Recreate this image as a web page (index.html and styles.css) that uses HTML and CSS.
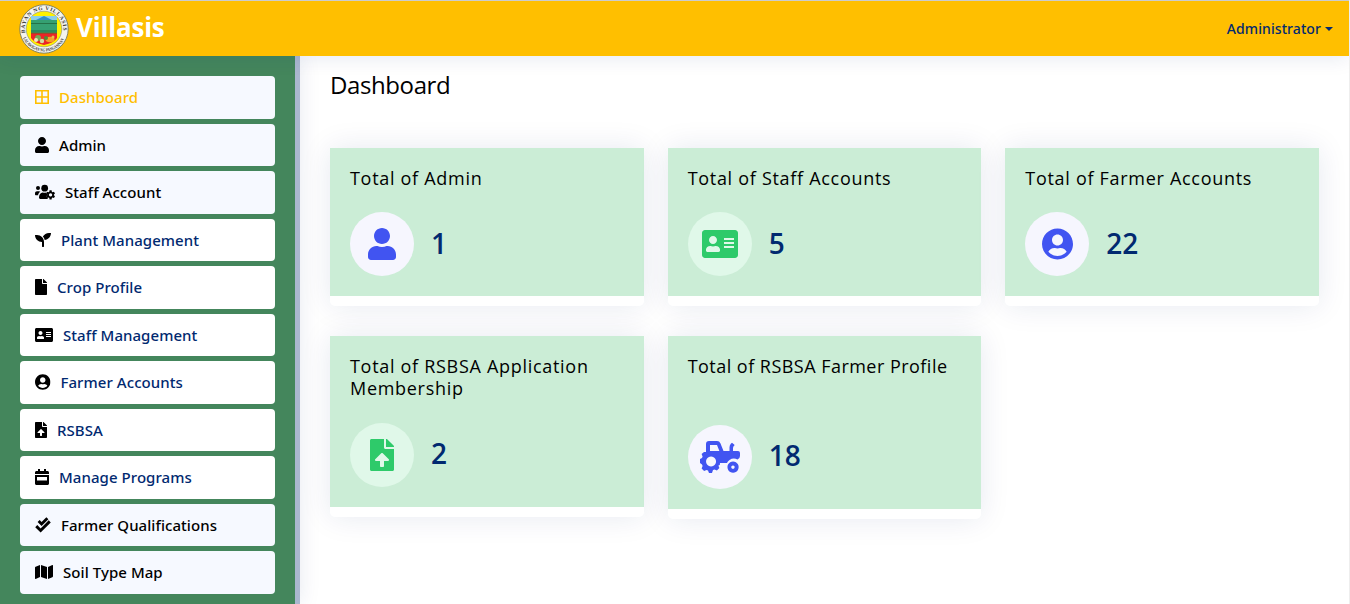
FILE: index.html
```html
<!DOCTYPE html>
<html lang="en">
<head>
<meta charset="utf-8">
<title>Dashboard</title>
<link rel="stylesheet" href="styles.css">
</head>
<body>
<svg width="0" height="0" class="defs">
  <symbol id="user" viewBox="0 0 448 512"><path d="M224 256c70.700 0 128-57.300 128-128S294.700 0 224 0 96 57.300 96 128s57.300 128 128 128zm89.600 32h-16.700c-22.200 10.200-46.900 16-72.900 16s-50.600-5.800-72.900-16h-16.700C60.200 288 0 348.200 0 422.400V464c0 26.500 21.500 48 48 48h352c26.500 0 48-21.500 48-48v-41.600c0-74.200-60.200-134.400-134.400-134.400z"/></symbol>
  <symbol id="card" viewBox="0 0 576 512"><path fill-rule="evenodd" d="M528 32H48C21.500 32 0 53.500 0 80v352c0 26.500 21.500 48 48 48h480c26.500 0 48-21.500 48-48V80c0-26.500-21.500-48-48-48zm-352 96c35.300 0 64 28.700 64 64s-28.700 64-64 64-64-28.700-64-64 28.700-64 64-64zm112 236.800c0 10.600-10 19.200-22.400 19.200H86.400C74 384 64 375.400 64 364.800v-19.200c0-31.800 30.100-57.600 67.200-57.600h5c12.300 5.100 25.700 8 39.800 8s27.600-2.900 39.800-8h5c37.100 0 67.200 25.800 67.200 57.600zM352 160h160v32H352zM352 224h160v32H352zM352 288h160v32H352z"/></symbol>
  <symbol id="circle-user" viewBox="0 0 496 512"><path d="M248 8C111 8 0 119 0 256s111 248 248 248 248-111 248-248S385 8 248 8zm0 96c48.600 0 88 39.400 88 88s-39.400 88-88 88-88-39.400-88-88 39.400-88 88-88zm0 344c-58.700 0-111.300-26.600-146.500-68.200 18.800-35.400 55.600-59.800 98.500-59.800 2.400 0 4.800.4 7.100 1.100 13 4.200 26.600 6.900 40.900 6.900 14.300 0 28-2.700 40.900-6.900 2.300-.7 4.700-1.100 7.100-1.100 42.900 0 79.700 24.400 98.500 59.800C359.300 421.400 306.700 448 248 448z"/></symbol>
  <symbol id="upload" viewBox="0 0 384 512"><path d="M224 136V0H24C10.700 0 0 10.700 0 24v464c0 13.300 10.700 24 24 24h336c13.300 0 24-10.700 24-24V160H248c-13.200 0-24-10.800-24-24zm65.200 216H224v80c0 8.800-7.200 16-16 16h-32c-8.800 0-16-7.200-16-16v-80H94.800c-14.300 0-21.400-17.300-11.300-27.400l96.500-95.700c6.600-6.600 17.400-6.600 24 0l96.400 95.700c10.200 10.100 3.100 27.400-11.200 27.400zM377 105L279.100 7c-4.500-4.500-10.600-7-17-7H256v128h128v-6.100c0-6.300-2.500-12.400-7-16.900z"/></symbol>
  <symbol id="file" viewBox="0 0 384 512"><path d="M224 136V0H24C10.700 0 0 10.700 0 24v464c0 13.300 10.700 24 24 24h336c13.300 0 24-10.700 24-24V160H248c-13.200 0-24-10.800-24-24zm160-14.100v6.100H256V0h6.100c6.400 0 12.500 2.500 17 7l97.900 98c4.500 4.500 7 10.600 7 16.900z"/></symbol>
  <symbol id="grid" viewBox="0 0 14 14"><path fill-rule="evenodd" d="M0 0h14v14H0zM1.600 1.600v4.600h4.600V1.600zM7.800 1.600v4.600h4.600V1.600zM1.600 7.800v4.600h4.600V7.800zM7.800 7.800v4.600h4.600V7.800z"/></symbol>
  <symbol id="users" viewBox="0 0 640 512"><circle cx="96" cy="130" r="64"/><circle cx="310" cy="134" r="108"/><path d="M0 300c0-38 29-68 64-68h64c18 0 34 7 45 18-40 22-68 62-74 110H32c-18 0-32-14-32-32zM128 422c0-84 50-154 115-154h8c34 16 72 16 106 0h10l-5 20 38 64-36 40 50 88H176c-26 0-48-22-48-48z"/><path fill-rule="evenodd" d="M465 200h66l8 46 22 14 46-16 32 56-34 32v30l34 32-32 56-46-16-22 14-8 46h-66l-8-46-22-14-46 16-32-56 34-32v-30l-34-32 32-56 46 16 22-14zM498 295a52 52 0 1 0 .1 0z"/></symbol>
  <symbol id="seedling" viewBox="0 0 512 512"><path d="M64 96H0c0 123.700 100.300 224 224 224v144c0 8.800 7.200 16 16 16h32c8.800 0 16-7.200 16-16V320C288 196.300 187.700 96 64 96zm384-64c-84.200 0-157.400 46.500-195.700 115.200 27.700 30.200 48.200 66.900 59 107.600C424 243.100 512 147.900 512 32h-64z"/></symbol>
  <symbol id="calendar" viewBox="0 0 448 512"><path fill-rule="evenodd" d="M96 0h64v64h128V0h64v64h48c26 0 48 22 48 48v48H0v-48c0-26 22-48 48-48h48zM0 192h448v272c0 26-22 48-48 48H48c-26 0-48-22-48-48zM64 256v112h320V256z"/></symbol>
  <symbol id="checks" viewBox="0 0 512 512"><path d="M116 130l94 94L396 38M40 292l140 140L472 140" fill="none" stroke="currentColor" stroke-width="92"/></symbol>
  <symbol id="map" viewBox="0 0 576 512"><path d="M0 117.700V464c0 11.300 11.400 19.100 21.900 14.900L160 416V32L20.100 88A32 32 0 0 0 0 117.700zM192 416l192 64V96L192 32zM554.100 33.200L416 96v384l139.900-56A32 32 0 0 0 576 394.300V48c0-11.300-11.400-19-21.900-14.800z"/></symbol>
  <symbol id="tractor" viewBox="0 0 40 32"><path fill-rule="evenodd" d="M6 11V3q0-3 3-3h8q2.500 0 3.400 2.300L23.500 10h6V6.500q0-2 1.300-3.700L32 1.800l2.700 2.200q-1.700 1.500-1.700 3V10h5q2 0 2 2v3q0 2.500-2.500 3.500-4-2.200-8 .5-2 1.500-2.500 3H20l-.2 2-1.400.5 1 2.500-2.500 2.500-2.400-1-1.500.6L12 32H9l-1-2.400-1.500-.6-2.400 1-2.500-2.500 1-2.500-.6-1.500L0 22v-4l2-1 .6-1.500-1-2.400L4 11zM10 4v6h9.400L17 4zM11 15.500a5 5 0 1 0 .1 0z"/><path fill-rule="evenodd" d="M33 20.500a5.600 5.600 0 1 0 .1 0zm0 3.900a1.700 1.700 0 1 1-.1 0z"/></symbol>
</svg>
<header class="header">
  <div class="brand">
    <svg class="seal" viewBox="0 0 50 50">
      <defs><path id="arc-top" d="M6.200 29A19.200 19.200 0 1 1 43.800 29"/><path id="arc-bottom" d="M4 34A23 23 0 0 0 46 34"/></defs>
      <circle cx="25" cy="25" r="24.200" fill="#f4f4ee" stroke="#66705f" stroke-width=".8"/>
      <circle cx="25" cy="25" r="17.800" fill="#fff200" stroke="#777" stroke-width=".5"/>
      <path d="M12 12h26v22q-3 5-13 7-10-2-13-7z" fill="#eb2427"/>
      <path d="M12 12h26v17H12z" fill="#35a072"/>
      <path d="M12 12h26v4H12z" fill="#8bcfe8"/>
      <path d="M17 16l8-4 8 4z" fill="#3290c7"/>
      <path d="M12 19.500h26M12 27h26" stroke="#247348" stroke-width="1.200"/>
      <path d="M12 29h26" stroke="#5d632b"/>
      <circle cx="19" cy="34" r="3" fill="#78a856"/><circle cx="17" cy="36" r="2" fill="#f6e6bd"/><circle cx="23" cy="37" r="2.200" fill="#d6dba0"/>
      <ellipse cx="31" cy="35.500" rx="4.500" ry="2.700" fill="#f5a02a"/><circle cx="27" cy="34" r="2" fill="#4f8c37"/><circle cx="34" cy="33" r="1.500" fill="#e8c34a"/>
      <text class="seal-text"><textPath href="#arc-top" textLength="65">BAYAN NG VILLASIS</textPath></text>
      <text class="seal-text seal-small"><textPath href="#arc-bottom" textLength="51" lengthAdjust="spacingAndGlyphs">LALAWIGAN NG PANGASINAN</textPath></text>
    </svg>
    <span class="brand-name">Villasis</span>
  </div>
  <div class="account"><span>Administrator</span><i class="caret"></i></div>
</header>
<div class="shell">
  <nav class="sidebar">
    <a class="item tint active"><svg class="w14 h14"><use href="#grid"/></svg><span>Dashboard</span></a>
    <a class="item tint"><svg class="w14"><use href="#user"/></svg><span>Admin</span></a>
    <a class="item tint"><svg class="w20"><use href="#users"/></svg><span>Staff Account</span></a>
    <a class="item"><svg class="w16"><use href="#seedling"/></svg><span>Plant Management</span></a>
    <a class="item"><svg class="w12"><use href="#file"/></svg><span>Crop Profile</span></a>
    <a class="item"><svg class="w18"><use href="#card"/></svg><span>Staff Management</span></a>
    <a class="item"><svg class="w155"><use href="#circle-user"/></svg><span>Farmer Accounts</span></a>
    <a class="item"><svg class="w12"><use href="#upload"/></svg><span>RSBSA</span></a>
    <a class="item"><svg class="w14"><use href="#calendar"/></svg><span>Manage Programs</span></a>
    <a class="item tint"><svg class="w16"><use href="#checks"/></svg><span>Farmer Qualifications</span></a>
    <a class="item tint"><svg class="w18"><use href="#map"/></svg><span>Soil Type Map</span></a>
  </nav>
  <main class="main">
    <h1>Dashboard</h1>
    <div class="cards">
      <section class="card"><div class="body"><h2>Total of Admin</h2><div class="stat"><span class="disc blue"><svg width="28" height="32"><use href="#user"/></svg></span><b>1</b></div></div></section>
      <section class="card"><div class="body"><h2>Total of Staff Accounts</h2><div class="stat"><span class="disc green"><svg width="36" height="32"><use href="#card"/></svg></span><b>5</b></div></div></section>
      <section class="card"><div class="body"><h2>Total of Farmer Accounts</h2><div class="stat"><span class="disc blue"><svg width="31" height="32"><use href="#circle-user"/></svg></span><b>22</b></div></div></section>
      <section class="card"><div class="body membership"><h2>Total of RSBSA Application Membership</h2><div class="stat"><span class="disc green"><svg width="24" height="32"><use href="#upload"/></svg></span><b>2</b></div></div></section>
      <section class="card"><div class="body profile"><h2>Total of RSBSA Farmer Profile</h2><div class="stat"><span class="disc blue"><svg width="40" height="32"><use href="#tractor"/></svg></span><b>18</b></div></div></section>
    </div>
  </main>
</div>
</body>
</html>
```
FILE: styles.css
```css
* { box-sizing: border-box; }
body { margin: 0; height: 604px; overflow: hidden; background: #fff; font-family: "Noto Sans", "Open Sans", sans-serif; border-right: 1px solid #eee; }
.defs { position: absolute; }
svg { display: block; fill: currentColor; flex: none; }
.header { position: relative; z-index: 2; height: 56px; padding: 0 16px 0 19px; display: flex; justify-content: space-between; align-items: center; background: #ffbf00; border-top: 1px solid #ccc; box-shadow: 0 2px 20px rgba(1,41,112,.1); }
.brand { display: flex; align-items: center; gap: 7px; }
.seal { width: 50px; height: 50px; }
.seal-text { font: bold 5.500px "Liberation Serif", serif; fill: #333; }
.seal-small { font-size: 4.600px; }
.brand-name { color: #fff; font: 700 26px/30px "Open Sans", sans-serif; letter-spacing: -.2px; margin-top: -3px; }
.account { display: flex; align-items: center; gap: 4px; color: #012970; font-size: 14px; font-weight: 500; letter-spacing: .08px; }
.caret { border: 4px solid transparent; border-top-color: #012970; border-bottom: 0; }
.shell { display: flex; height: 548px; }
.sidebar { width: 300px; flex: none; padding: 20px 20px 10px; display: flex; flex-direction: column; gap: 5px; background: #44865c; border-right: 5px solid #aab7cf; box-shadow: 0 0 20px rgba(1,41,112,.1); }
.item { height: 42.500px; flex: none; padding: 0 15px; display: flex; align-items: center; gap: 10px; border-radius: 4px; background: #fff; color: #012970; font-size: 15px; font-weight: 500; letter-spacing: .06px; white-space: nowrap; }
.item svg { height: 16px; color: #000; }
.tint { background: #f6f9ff; color: #000; }
.active, .item.active svg { color: #ffbf00; }
.w12 { width: 12px; } .w14 { width: 14px; } .w155 { width: 15.500px; } .w16 { width: 16px; } .w18 { width: 18px; } .w20 { width: 20px; }
.item .h14 { height: 14px; }
.main { flex: 1; padding: 14px 30px 0; }
h1 { margin: 0 0 48px; color: #000; font: 400 24px/30px "Open Sans", sans-serif; letter-spacing: -.4px; }
.cards { display: grid; grid-template-columns: repeat(3, 1fr); gap: 30px 24px; align-items: start; }
.card { padding-bottom: 10px; border-radius: 5px; background: #fff; box-shadow: 0 0 30px rgba(1,41,112,.1); }
.body { height: 148px; padding: 19px 20px 20px; background: #cbedd6; display: flex; flex-direction: column; justify-content: space-between; }
.membership { height: 171px; }
.profile { height: 173px; }
h2 { margin: 0; color: #000; font: 400 18px/22px "Open Sans", sans-serif; letter-spacing: .7px; }
.profile h2 { letter-spacing: .47px; }
.stat { display: flex; align-items: center; gap: 17px; }
.stat b { color: #012970; font: 600 28px/34px "Open Sans", sans-serif; margin-top: -2px; }
.membership b, .profile b { margin-top: -4px; }
.disc { width: 64px; height: 64px; border-radius: 50%; display: flex; align-items: center; justify-content: center; }
.blue { background: #f6f6fe; color: #4154f1; }
.green { background: #e0f8e9; color: #2eca6a; }
```
